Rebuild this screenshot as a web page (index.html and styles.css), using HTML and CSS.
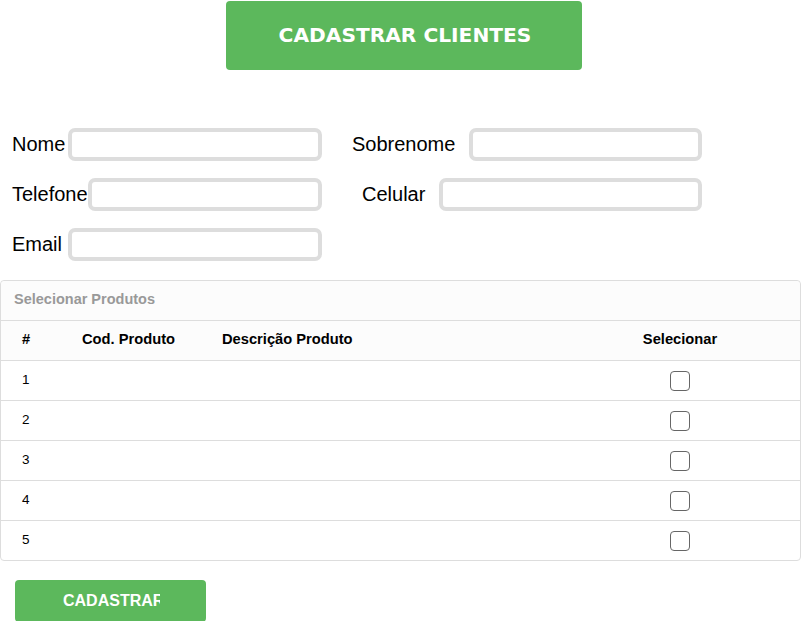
FILE: index.html
```html
<!DOCTYPE html>
<html lang="pt">
<head>
<meta charset="utf-8">
<title>Cadastrar Clientes</title>
<link rel="stylesheet" href="styles.css">
</head>
<body>
<header class="top">
  <h1 class="title">CADASTRAR CLIENTES</h1>
</header>
<form class="form">
  <div class="row">
    <div class="field">
      <label class="lbl">Nome</label>
      <input class="inp" type="text">
    </div>
    <div class="field field-right">
      <label class="lbl lbl-gap">Sobrenome</label>
      <input class="inp" type="text">
    </div>
  </div>
  <div class="row">
    <div class="field">
      <label class="lbl">Telefone</label>
      <input class="inp" type="text">
    </div>
    <div class="field field-right field-indent">
      <label class="lbl lbl-gap">Celular</label>
      <input class="inp" type="text">
    </div>
  </div>
  <div class="row">
    <div class="field">
      <label class="lbl">Email</label>
      <input class="inp" type="text">
    </div>
  </div>
</form>
<section class="panel">
  <div class="panel-head">Selecionar Produtos</div>
  <div class="trow thead">
    <div class="cell">#</div>
    <div class="cell">Cod. Produto</div>
    <div class="cell">Descrição Produto</div>
    <div class="cell cell-c">Selecionar</div>
  </div>
  <div class="trow"><div class="cell num">1</div><div class="cell"></div><div class="cell"></div><div class="cell cell-c"><span class="chk"></span></div></div>
  <div class="trow"><div class="cell num">2</div><div class="cell"></div><div class="cell"></div><div class="cell cell-c"><span class="chk"></span></div></div>
  <div class="trow"><div class="cell num">3</div><div class="cell"></div><div class="cell"></div><div class="cell cell-c"><span class="chk"></span></div></div>
  <div class="trow"><div class="cell num">4</div><div class="cell"></div><div class="cell"></div><div class="cell cell-c"><span class="chk"></span></div></div>
  <div class="trow"><div class="cell num">5</div><div class="cell"></div><div class="cell"></div><div class="cell cell-c"><span class="chk"></span></div></div>
</section>
<div class="actions">
  <button class="btn" type="button"><span class="btn-txt">CADASTRAR</span></button>
</div>
</body>
</html>
```
FILE: styles.css
```css
html, body {
  margin: 0;
  padding: 0;
  background: #fff;
  font-family: "Liberation Sans", Arial, sans-serif;
  color: #000;
  overflow: hidden;
}
.top {
  padding: 1px 0 0 226px;
}
.title {
  margin: 0;
  width: 356px;
  height: 69px;
  box-sizing: border-box;
  background: #5cb85c;
  border-radius: 4px;
  color: #fff;
  font-family: "DejaVu Sans", Verdana, sans-serif;
  font-weight: bold;
  font-size: 20.2px;
  padding: 0 0 2px 2px;
  display: flex;
  align-items: center;
  justify-content: center;
}
.form {
  margin: 58px 0 0 12px;
  padding-bottom: 1px;
}
.row {
  display: flex;
  height: 33px;
  margin-bottom: 17px;
}
.row:last-child {
  margin-bottom: 0;
}
.field {
  display: flex;
  align-items: center;
  width: 310px;
}
.field-right {
  margin-left: 30px;
  width: 350px;
}
.field-indent {
  padding-left: 10px;
  width: 340px;
}
.lbl {
  font-size: 20px;
  min-width: 56px;
  line-height: 33px;
}
.lbl-gap {
  margin-right: 14px;
  min-width: 0;
}
.inp {
  flex: 1;
  min-width: 0;
  height: 33px;
  box-sizing: border-box;
  border: 4px solid #dddddd;
  border-radius: 7px;
  background: #fff;
  outline: none;
  padding: 0 6px;
  font-size: 16px;
}
.panel {
  margin-top: 18px;
  border: 1px solid #dddddd;
  border-radius: 4px;
  width: 801px;
  box-sizing: border-box;
}
.panel-head {
  height: 39px;
  box-sizing: border-box;
  padding: 0 0 3px 13px;
  display: flex;
  align-items: center;
  background: #fcfcfc;
  color: #999;
  font-weight: bold;
  font-size: 14.5px;
  border-radius: 4px 4px 0 0;
}
.trow {
  display: grid;
  grid-template-columns: 60px 140px 1fr 120px;
  padding-right: 60px;
  height: 39px;
  border-top: 1px solid #dddddd;
  align-items: center;
  font-size: 13.5px;
}
.thead {
  background: #fcfcfc;
  font-weight: bold;
  font-size: 14.7px;
  padding-bottom: 3px;
  height: 36px;
}
.num {
  padding-bottom: 2px;
}
.cell {
  padding-left: 21px;
  white-space: nowrap;
}
.cell-c {
  padding-left: 0;
  text-align: center;
  display: flex;
  justify-content: center;
}
.chk {
  display: block;
  width: 18px;
  height: 18px;
  border: 1.5px solid #666;
  border-radius: 4px;
  background: #fff;
}
.actions {
  padding: 19px 0 0 15px;
}
.btn {
  width: 191px;
  height: 42px;
  border: 0;
  border-radius: 4px;
  background: #5cb85c;
  color: #fff;
  font-family: "Liberation Sans", Arial, sans-serif;
  font-weight: bold;
  font-size: 16px;
  padding: 0 0 0 48px;
  display: flex;
  align-items: center;
  cursor: pointer;
}
.btn-txt {
  display: block;
  width: 97px;
  overflow: hidden;
  white-space: nowrap;
}
```
